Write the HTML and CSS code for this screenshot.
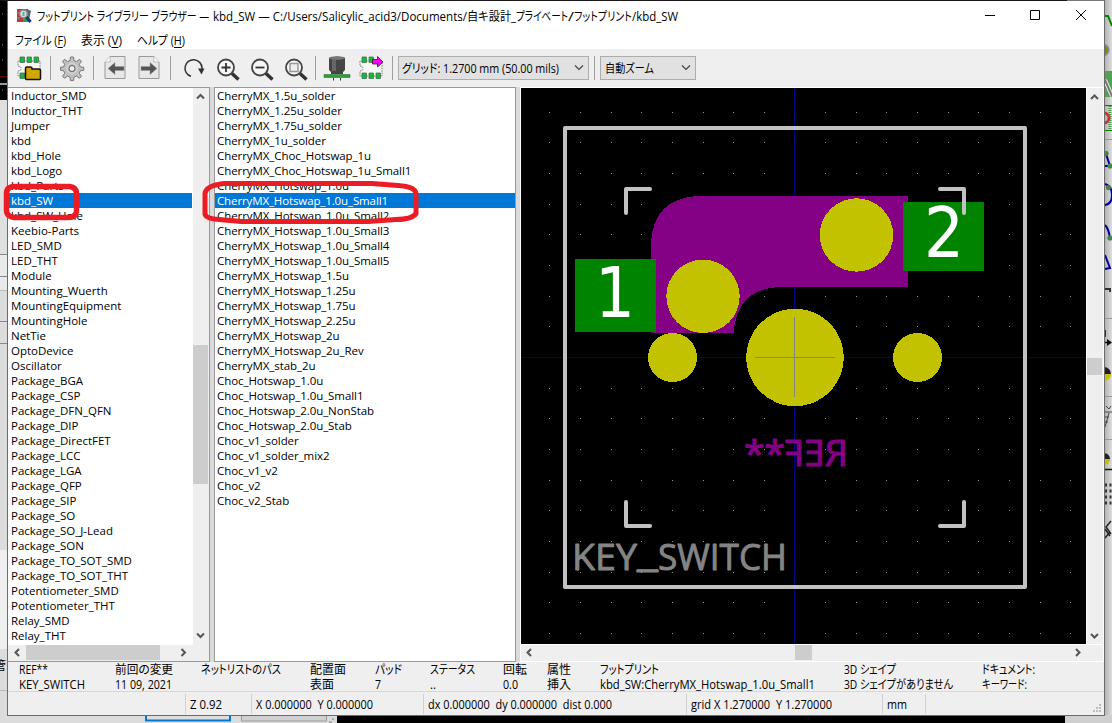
FILE: index.html
```html
<!DOCTYPE html>
<html lang="ja">
<head>
<meta charset="utf-8">
<title>フットプリント ライブラリー ブラウザー</title>
<link rel="stylesheet" href="styles.css">
</head>
<body>
<div class="desktop">
  <svg class="backdrop" width="1112" height="723" viewBox="0 0 1112 723">
    <defs><linearGradient id="shade"><stop offset="0" stop-color="#b4b4b4"/><stop offset="1" stop-color="#dedede"/></linearGradient></defs>
    <rect width="1112" height="723" fill="#dcdcdc"/>
    <rect width="8" height="100" fill="#000"/>
    <path d="M2 14h1M2 45h1M2 60h1M2 90h1" stroke="#888"/>
    <path d="M0 76.500h8" stroke="#600"/><path d="M0 84h8" stroke="#999" stroke-width="2"/>
    <rect y="100" width="8" height="154" fill="#e0e0e0"/><rect y="254" width="8" height="36" fill="#eaeaea"/>
    <path d="M0 254.500h8M0 276.500h8M0 321.500h8M0 343.500h8" stroke="#888"/><path d="M0 290.500h8M0 690.500h8" stroke="#bbb"/>
    <rect y="550" width="8" height="99" fill="#eee"/>
    <rect width="1067" height="1" fill="#1c171b"/><rect x="1067" width="45" height="1" fill="#777"/>
    <rect x="1105" width="7" height="723" fill="url(#shade)"/>
    <path d="M146 715v5.500h84v-5.500" fill="#ddd" stroke="#0078d7" stroke-width="2"/>
    <path d="M241.500 715v6h85v-6" fill="#d0d0d0" stroke="#999"/>
    <rect x="337" y="715" width="728" height="8" fill="#000"/><rect x="1065" y="715" width="47" height="8" fill="#cfcfcf"/>
    <path d="M329 722h3M332 719h2" stroke="#aaa" stroke-width="2"/>
    <g fill="none">
      <path d="M1105 16h3l4 10" stroke="#008400" stroke-width="2"/>
      <circle cx="1103" cy="50" r="5.500" fill="#848400" stroke="#888" stroke-width="2"/>
      <rect x="1105" y="71" width="7" height="26" fill="#55a055"/><path d="M1105 80l7 16" stroke="#eee" stroke-width="4"/><path d="M1105 80l7 16" stroke="#777" stroke-width="2"/>
      <path d="M1105 105.500h7M1105 130.500h7" stroke="#008400"/><path d="M1110 106v24" stroke="#4a9a4a" stroke-width="3" stroke-dasharray="1 1"/><circle cx="1104" cy="118" r="5" stroke="#c83737" stroke-width="3"/>
      <path d="M1105 139.500h7M1105 318.500h7M1105 396.500h7M1105 439.500h7" stroke="#999"/>
      <path d="M1106 154l4 12h-5M1105 184q7 2 7 11t-7 10M1105 225q4 4 5 14M1105 255l5 13-5 1" stroke="#0000a0" stroke-width="2"/>
      <g fill="#2a9a2a" stroke="#666" stroke-width=".8"><circle cx="1106" cy="153.500" r="2.300"/><circle cx="1110" cy="166" r="2.300"/><circle cx="1108.500" cy="187.500" r="2.300"/><circle cx="1110" cy="238" r="2.300"/></g>
      <path d="M1105 289h5v3M1105 330v7" stroke="#333" stroke-width="2"/><path d="M1104 342.500h7M1104 469.500h8" stroke="#111" stroke-width="1.500"/>
      <path d="M1107 339l5 3.500-5 3.500z" fill="#111"/>
      <path d="M1104 367a7 7 0 0 1 7 7h-7z" fill="#222"/><path d="M1111 374a7 7 0 0 1-7 7v-7z" fill="#c2c200"/>
      <path d="M1104 453a6 6 0 0 1 6 6h-6z" fill="#222"/><path d="M1110 459a6 6 0 0 1-6 6v-6z" fill="#c2c200"/>
      <path d="M1105 412h7M1109 413l-4 14M1105 417h4M1105 422h3M1106 406l3 3 2-3" stroke="#444"/>
      <path d="M1105 485h7M1105 491h7M1105 497h7M1105 503h7" stroke="#333" stroke-width="3" stroke-dasharray="2 2.500"/>
      <path d="M1111 521l-5 6 5 7M1105 529l5 7M1105 538l5-6" stroke="#222" stroke-width="1.500"/>
    </g>
    <text x="-6" y="670" class="backdrop-text">管</text>
  </svg>

  <main class="window">
    <header class="titlebar">
      <svg class="app-icon" width="16" height="16" viewBox="0 0 16 16"><path d="M0 1h6v13H0z" fill="#c33"/><path d="M0 5h3M0 10h3" stroke="#777" stroke-width="2"/><path d="M6 1h5v13H6z" fill="#394"/><path d="M10 1l4 2-2 9-3-3z" fill="#567"/><circle cx="6.500" cy="6" r="3.800" fill="#cfded9" stroke="#889" stroke-width="1.300"/><path d="M5.500 4h2v4h-2z" fill="#6a9"/><path d="M9.500 9l4 5" stroke="#123a70" stroke-width="3"/></svg>
      <h1 class="title"><span data-w="172">フットプリント ライブラリー ブラウザー —</span><span class="gap4" data-w="254">kbd_SW — C:/Users/Salicylic_acid3/Documents/</span><span data-w="49">自キ設計_</span><span data-w="52">プライベート</span><span data-w="6">/</span><span data-w="58">フットプリント</span><span data-w="46">/kbd_SW</span></h1>
      <svg class="controls" width="102" height="12" viewBox="0 0 102 12"><path d="M0 6.500h10M45.500 1.500h9v9h-9zM91 1l10 10M101 1L91 11" fill="none" stroke="#000"/></svg>
    </header>
    <nav class="menu">
      <span data-w="51">ファイル (<u>F</u>)</span><span data-w="41">表示 (<u>V</u>)</span><span data-w="48">ヘルプ (<u>H</u>)</span>
    </nav>

    <div class="toolbar">
      <span class="tool"><svg viewBox="0 0 24 24"><path d="M1 5v5q3 0 3 2.500T1 15v5h22V5z" fill="#f8f8f8" stroke="#777" stroke-dasharray="1.500 1"/><path d="M3 1h4.500v5.500H3zM10 1h4.500v5.500H10zM17 1h4.500v5.500H17zM3 17h4.500v5.500H3z" fill="#0fbd2f" stroke="#4a705a" stroke-width=".8"/><path d="M8.500 12.500q0-1.500 1.500-1.500h3.500q1.500 0 1.500 2h7q1.500 0 1.500 1.500v8q0 1-1 1H9.500q-1 0-1-1z" fill="#d0a600" stroke="#111" stroke-width="1.500"/></svg></span>
      <i class="sep"></i>
      <span class="tool"><svg viewBox="0 0 24 24"><path d="M10.500 1h3l.5 3.500 2.500 1 3-2.200 2 2-2.200 3 1 2.500 3.500.5v3l-3.500.5-1 2.500 2.200 3-2 2-3-2.200-2.500 1-.5 3.500h-3l-.5-3.500-2.500-1-3 2.200-2-2 2.200-3-1-2.500L.5 14.300v-3l3.200-.5 1-2.500-2.200-3 2-2 3 2.200 2.500-1z" fill="#c0c0c0" stroke="#777"/><circle cx="12" cy="12.500" r="5" fill="none" stroke="#ddd"/><circle cx="12" cy="12.500" r="3" fill="#efefef" stroke="#555"/></svg></span>
      <i class="sep"></i>
      <span class="tool"><svg viewBox="0 0 24 24"><path d="M7 .5h15v22H2V6z" fill="#e7e7e7" stroke="#999"/><path d="M2 6h5V.500" fill="#fff" stroke="#bbb"/><path d="M5 12.500l7-6v4h9v4h-9v4z" fill="#555" stroke="#999" stroke-width=".5"/></svg></span>
      <span class="tool"><svg viewBox="0 0 24 24"><path d="M2 .5h15L22 6v16.500H2z" fill="#e7e7e7" stroke="#999"/><path d="M17 .5V6h5" fill="#fff" stroke="#bbb"/><path d="M20 12.500l-7-6v4H4v4h9v4z" fill="#555" stroke="#999" stroke-width=".5"/></svg></span>
      <i class="sep sep-view"></i>
      <span class="tool"><svg viewBox="0 0 24 24"><path d="M9 20.300A8.500 8.500 0 1 1 20 12v1" fill="none" stroke="#333" stroke-width="1.500"/><path d="M16 12.500h6.500l-3 6z" fill="#333"/></svg></span>
      <span class="tool"><svg viewBox="0 0 24 24"><circle cx="10" cy="11.500" r="8" fill="#f6f6f6" stroke="#444" stroke-width="1.800"/><path d="M5.500 11.500h9M10 7v9" stroke="#333" stroke-width="1.800"/><path d="M16 17.500l6.500 6" stroke="#333" stroke-width="3.500"/></svg></span>
      <span class="tool"><svg viewBox="0 0 24 24"><circle cx="10" cy="11.500" r="8" fill="#f6f6f6" stroke="#444" stroke-width="1.800"/><path d="M5.500 11.500h9" stroke="#333" stroke-width="1.800"/><path d="M16 17.500l6.500 6" stroke="#333" stroke-width="3.500"/></svg></span>
      <span class="tool"><svg viewBox="0 0 24 24"><circle cx="10" cy="11.500" r="8" fill="#f6f6f6" stroke="#444" stroke-width="1.800"/><rect x="6" y="7.500" width="8" height="8" fill="#eee" stroke="#999" stroke-width="1.500"/><path d="M16 17.500l6.500 6" stroke="#333" stroke-width="3.500"/></svg></span>
      <i class="sep sep-chip"></i>
      <span class="tool"><svg viewBox="0 0 24 24"><path d="M4 2v12l2 2v2h12v-2l2-2V2q-8-3-16 0z" fill="#454545"/><path d="M7 2h4v13H7z" fill="#666"/><ellipse cx="12" cy="2" rx="8" ry="1.800" fill="#777"/><path d="M-1 18.500h26v3H-1z" fill="#2f9e38" stroke="#267b2d" stroke-width=".6"/><path d="M8.500 22v2.500M15.500 22v2.500" stroke="#333"/></svg></span>
      <span class="tool"><svg viewBox="0 0 24 24"><path d="M1 5v5q3 0 3 2.500T1 15v5h22V5z" fill="#f8f8f8" stroke="#777" stroke-dasharray="1.500 1"/><path d="M3 1h4.500v5.500H3zM10 1h4.500v5.500H10zM3 17h4.500v5.500H3zM10 17h4.500v5.500H10zM17 17h4.500v5.500H17z" fill="#0fbd2f" stroke="#4a705a" stroke-width=".8"/><path d="M13.500 3.500h5v-3l5.500 5.500-5.500 5v-3h-5z" fill="#f0f" stroke="#222" stroke-width=".8"/></svg></span>
      <i class="sep sep-combo"></i>
      <span class="combo combo-grid"><span data-w="157">グリッド: 1.2700 mm (50.00 mils)</span><svg width="10" height="6" viewBox="0 0 10 6"><path d="M1 .500l4 4 4-4"/></svg></span>
      <i class="sep sep-combo"></i>
      <span class="combo combo-zoom"><span data-w="49">自動ズーム</span><svg width="10" height="6" viewBox="0 0 10 6"><path d="M1 .500l4 4 4-4"/></svg></span>
    </div>

    <div class="panes">
      <section class="pane libs">
        <ul class="list">
          <li>Inductor_SMD</li><li>Inductor_THT</li><li>Jumper</li><li>kbd</li><li>kbd_Hole</li><li>kbd_Logo</li><li>kbd_Parts</li><li class="selected">kbd_SW</li><li>kbd_SW_Hole</li><li>Keebio-Parts</li><li>LED_SMD</li><li>LED_THT</li><li>Module</li><li>Mounting_Wuerth</li><li>MountingEquipment</li><li>MountingHole</li><li>NetTie</li><li>OptoDevice</li><li>Oscillator</li><li>Package_BGA</li><li>Package_CSP</li><li>Package_DFN_QFN</li><li>Package_DIP</li><li>Package_DirectFET</li><li>Package_LCC</li><li>Package_LGA</li><li>Package_QFP</li><li>Package_SIP</li><li>Package_SO</li><li>Package_SO_J-Lead</li><li>Package_SON</li><li>Package_TO_SOT_SMD</li><li>Package_TO_SOT_THT</li><li>Potentiometer_SMD</li><li>Potentiometer_THT</li><li>Relay_SMD</li><li>Relay_THT</li>
        </ul>
        <svg class="vbar" width="16" height="557" viewBox="0 0 16 557"><rect y="257" width="15" height="139" fill="#cdcdcd"/><path d="M4 10.500L7.500 7l3.500 3.500M4 545.500l3.500 3.500 3.500-3.500"/></svg>
        <svg class="hbar" width="201" height="16" viewBox="0 0 201 16"><rect x="18" width="134" height="15" fill="#cdcdcd"/><path d="M11 4L7.500 7.500 11 11M173.500 4l3.500 3.500-3.500 3.500"/></svg>
      </section>
      <section class="pane prints">
        <ul class="list">
          <li>CherryMX_1.5u_solder</li><li>CherryMX_1.25u_solder</li><li>CherryMX_1.75u_solder</li><li>CherryMX_1u_solder</li><li>CherryMX_Choc_Hotswap_1u</li><li>CherryMX_Choc_Hotswap_1u_Small1</li><li>CherryMX_Hotswap_1.0u</li><li class="selected">CherryMX_Hotswap_1.0u_Small1</li><li>CherryMX_Hotswap_1.0u_Small2</li><li>CherryMX_Hotswap_1.0u_Small3</li><li>CherryMX_Hotswap_1.0u_Small4</li><li>CherryMX_Hotswap_1.0u_Small5</li><li>CherryMX_Hotswap_1.5u</li><li>CherryMX_Hotswap_1.25u</li><li>CherryMX_Hotswap_1.75u</li><li>CherryMX_Hotswap_2.25u</li><li>CherryMX_Hotswap_2u</li><li>CherryMX_Hotswap_2u_Rev</li><li>CherryMX_stab_2u</li><li>Choc_Hotswap_1.0u</li><li>Choc_Hotswap_1.0u_Small1</li><li>Choc_Hotswap_2.0u_NonStab</li><li>Choc_Hotswap_2.0u_Stab</li><li>Choc_v1_solder</li><li>Choc_v1_solder_mix2</li><li>Choc_v1_v2</li><li>Choc_v2</li><li>Choc_v2_Stab</li>
        </ul>
      </section>
      <section class="viewer">
        <svg class="board" width="565" height="556" viewBox="521 88 565 556">
          <rect x="521" y="88" width="565" height="556" fill="#000"/>
          <defs><path id="dots" stroke="#949494" d="M549 .500h1M580 .500h1M611 .500h1M641 .500h1M672 .500h1M703 .500h1M733 .500h1M764 .500h1M825 .500h1M856 .500h1M886 .500h1M917 .500h1M948 .500h1M978 .500h1M1009 .500h1M1040 .500h1M1070 .500h1"/></defs>
          <use href="#dots" y="112"/><use href="#dots" y="142"/><use href="#dots" y="173"/><use href="#dots" y="204"/><use href="#dots" y="234"/><use href="#dots" y="265"/><use href="#dots" y="296"/><use href="#dots" y="326"/><use href="#dots" y="388"/><use href="#dots" y="418"/><use href="#dots" y="449"/><use href="#dots" y="480"/><use href="#dots" y="510"/><use href="#dots" y="541"/><use href="#dots" y="572"/><use href="#dots" y="602"/><use href="#dots" y="633"/>
          <path d="M794.500 88v556M521 357.500h565" stroke="#000084"/>
          <path d="M697 196h210l1 1v89l-1 1H779Q737 289 733.500 333H651v-90Q653 199 697 196z" fill="#840084" shape-rendering="crispEdges"/>
          <path d="M575 259h81v73h-81zM903 202h81v69h-81z" fill="#008400"/>
          <text class="pad-number" x="595" y="317" textLength="40" lengthAdjust="spacingAndGlyphs">1</text><text class="pad-number" x="924" y="257" textLength="40" lengthAdjust="spacingAndGlyphs">2</text>
          <g fill="#c2c200" shape-rendering="crispEdges"><circle cx="703" cy="296.300" r="36.700"/><circle cx="856.500" cy="235" r="36.700"/><circle cx="795" cy="357.500" r="48.700"/><circle cx="672.500" cy="357.500" r="24.500"/><circle cx="917.500" cy="357.500" r="24.500"/></g>
          <path d="M755 357.500h80M794.500 317v80" stroke="#848484"/>
          <g fill="none" stroke="#c2c2c2" stroke-width="4" stroke-linecap="round" stroke-linejoin="round"><path d="M565 128h460v459H565z"/><path d="M650 189h-24v24M940 189h24v24M626 502v24h24M964 502v24h-24"/></g>
          <g class="value"><text x="572" y="570" textLength="65" lengthAdjust="spacingAndGlyphs">KEY</text><text x="637" y="567" textLength="21" lengthAdjust="spacingAndGlyphs">_</text><text x="658" y="570" textLength="129" lengthAdjust="spacingAndGlyphs">SWITCH</text></g>
          <text class="reference" transform="translate(848 466) scale(-1 1)" textLength="104" lengthAdjust="spacingAndGlyphs">REF**</text>
        </svg>
        <svg class="view-vbar" width="16" height="556" viewBox="0 0 16 556"><rect y="270" width="15" height="17" fill="#cdcdcd"/><path d="M4 11l3.500-3.500L11 11M4 546l3.500 3.500L11 546"/></svg>
        <svg class="view-hbar" width="582" height="16" viewBox="0 0 582 16"><rect x="274" width="17" height="15" fill="#cdcdcd"/><path d="M10 4L6.500 7.500 10 11M555 4l3.500 3.500-3.500 3.500"/></svg>
      </section>
    </div>

    <dl class="info">
      <div><dt data-w="29">REF**</dt><dd data-w="66">KEY_SWITCH</dd></div>
      <div><dt data-w="58">前回の変更</dt><dd data-w="57">11 09, 2021</dd></div>
      <div><dt data-w="80">ネットリストのパス</dt></div>
      <div><dt data-w="36">配置面</dt><dd data-w="24">表面</dd></div>
      <div><dt data-w="27">パッド</dt><dd data-w="6">7</dd></div>
      <div><dt data-w="45">ステータス</dt><dd data-w="6">..</dd></div>
      <div><dt data-w="24">回転</dt><dd data-w="15">0.0</dd></div>
      <div><dt data-w="24">属性</dt><dd data-w="24">挿入</dd></div>
      <div><dt data-w="59">フットプリント</dt><dd data-w="215">kbd_SW:CherryMX_Hotswap_1.0u_Small1</dd></div>
      <div><dt data-w="52">3D シェイプ</dt><dd data-w="109">3D シェイプがありません</dd></div>
      <div><dt data-w="53">ドキュメント:</dt><dd data-w="45">キーワード:</dd></div>
    </dl>
    <footer class="status">
      <span></span><span><b data-w="32">Z 0.92</b></span><span><b data-w="117">X 0.000000&nbsp; Y 0.000000</b></span><span><b data-w="184">dx 0.000000&nbsp; dy 0.000000&nbsp; dist 0.000</b></span><span><b data-w="141">grid X 1.270000&nbsp; Y 1.270000</b></span><span><b data-w="20">mm</b></span>
      <svg class="grip" width="9" height="9" viewBox="0 0 9 9"><path d="M6 0h2v2H6zM3 3h2v2H3zM6 3h2v2H6zM0 6h2v2H0zM3 6h2v2H3zM6 6h2v2H6z" fill="#bcbcbc"/></svg>
    </footer>
  </main>

  <svg class="marks" width="430" height="240" viewBox="0 0 430 240">
    <path d="M12.500 186.500h57q7 1 7 7v18q-1 6-8 6H14q-7.500-1-7.500-7v-17q0-6 6-7z" stroke-width="5.500"/>
    <path d="M224 183.500h148l26 2q17 1 18 8v20q-4 6-20 6l-28 2H241l-22-2q-14-1-14-6v-20q1-8 19-10z" stroke-width="5"/>
  </svg>
</div>
<script src="fit.js"></script>
</body>
</html>
```
FILE: styles.css
```css
* { box-sizing: border-box; }
body {
  margin: 0;
  overflow: hidden;
  font: 12px/15px "Open Sans", "Noto Sans CJK JP", sans-serif;
  color: #000;
}
.desktop { position: relative; width: 1112px; height: 723px; overflow: hidden; }
.backdrop { position: absolute; left: 0; top: 0; }
.backdrop-text { font-size: 12px; }
.window {
  position: absolute;
  left: 7px;
  top: 1px;
  width: 1098px;
  height: 715px;
  border: solid #6b6b6b;
  border-width: 0 1px 1px;
  background: #efefef;
  display: flex;
  flex-direction: column;
}
.titlebar { height: 30px; background: #fff; display: flex; align-items: center; padding-left: 9px; flex: none; }
.app-icon { margin-top: -1px; }
.title { margin: 0 0 0 4px; font-size: 12px; font-weight: 400; display: flex; white-space: nowrap; flex: 1; }
.gap4 { margin-left: 4px; }
.controls { margin: -2px 17px 0 0; }
[data-w] { display: inline-block; white-space: pre; transform-origin: 0 50%; flex: none; font-feature-settings: "palt"; }
.menu { height: 18px; background: #fff; display: flex; gap: 15px; padding: 2px 0 0 7px; flex: none; }
.menu u { text-underline-offset: 2px; }

.toolbar { height: 38px; display: flex; align-items: center; padding-left: 4px; flex: none; }
.tool { width: 34px; height: 24px; display: flex; justify-content: center; flex: none; }
.tool svg { width: 24px; height: 24px; overflow: visible; }
.sep { width: 1px; height: 24px; margin: 0 4px; background: #a0a0a0; flex: none; }
.sep-view { margin-right: 6px; }
.sep-chip { margin: 0 4px 0 2px; }
.sep-combo { margin: 0 5px 0 4px; }
.combo + .sep-combo { margin: 0 5px; }
.combo {
  height: 24px;
  display: flex;
  align-items: center;
  justify-content: space-between;
  background: #e1e1e1;
  border: 1px solid #adadad;
  padding: 0 4px;
}
.combo svg { fill: none; stroke: #444; stroke-width: 1.2; }
.combo-grid { width: 191px; padding-left: 3px; }
.combo-zoom { width: 96px; }

.panes { height: 575px; display: flex; gap: 4px; background: #dadada; flex: none; }
.pane { background: #fff; border: 1px solid #999; overflow: hidden; height: 575px; }
.libs { width: 202px; border-left: 0; display: grid; grid-template: 557px 16px / 184px 16px; column-gap: 1px; }
.libs .list { overflow: hidden; }
.prints { width: 302px; }
.list { margin: 0; padding: 0; list-style: none; font-size: 11.5px; }
.list li { height: 15px; padding-left: 3px; line-height: 15px; white-space: nowrap; }
.prints li { padding-left: 2px; letter-spacing: -.07px; }
.prints .selected { letter-spacing: -.12px; }
.list .selected { background: #0078d7; color: #fff; }
.vbar, .hbar, .view-vbar, .view-hbar { background: #efefef; fill: none; stroke: #555; stroke-width: 2; }
.hbar { grid-column: 1 / 3; }
.vbar rect, .hbar rect, .view-vbar rect, .view-hbar rect { stroke: none; }
.viewer { flex: 1; background: #fff; display: grid; grid-template: 556px 16px / 565px 17px; column-gap: 1px; row-gap: 1px; padding: 1px 0 0 1px; }
.view-hbar { grid-column: 1 / 3; }
.board { display: block; }
.pad-number { font: 69px "DejaVu Sans", sans-serif; fill: #fff; }
.value { font: 36px "Open Sans", sans-serif; fill: #848484; stroke: #848484; stroke-width: .9px; stroke-linejoin: round; }
.reference { font: 36px "Open Sans", sans-serif; fill: #840084; stroke: #840084; stroke-width: 1.2px; stroke-linejoin: round; }

.info {
  height: 30px;
  margin: 0;
  padding-left: 11px;
  display: grid;
  grid-template-columns: 96px 86px 109px 65px 55px 73px 44px 53px 244px 138px 1fr;
  border-bottom: 1px solid #d7d7d7;
  flex: none;
  white-space: nowrap;
}
.info dt, .info dd { margin: 0; display: block; height: 15px; line-height: 15px; }
.status { height: 23px; display: grid; grid-template-columns: 178px 66px 172px 263px 196px 43px 1fr; position: relative; }
.status span { border-right: 1px solid #d0d0d0; margin: 2px 0 1px; padding: 3px 0 0 4px; }
.status b { font-weight: 400; }
.grip { position: absolute; right: 2px; bottom: 2px; }
.marks { position: absolute; left: 0; top: 0; fill: none; stroke: #ec1c24; stroke-linejoin: round; pointer-events: none; }
```
FILE: fit.js
```javascript
document.querySelectorAll('[data-w]').forEach(function (el) {
  var target = Number(el.dataset.w);
  el.style.width = 'max-content';
  var natural = el.getBoundingClientRect().width;
  el.style.width = target + 'px';
  el.style.transform = 'scaleX(' + target / natural + ')';
});
```
